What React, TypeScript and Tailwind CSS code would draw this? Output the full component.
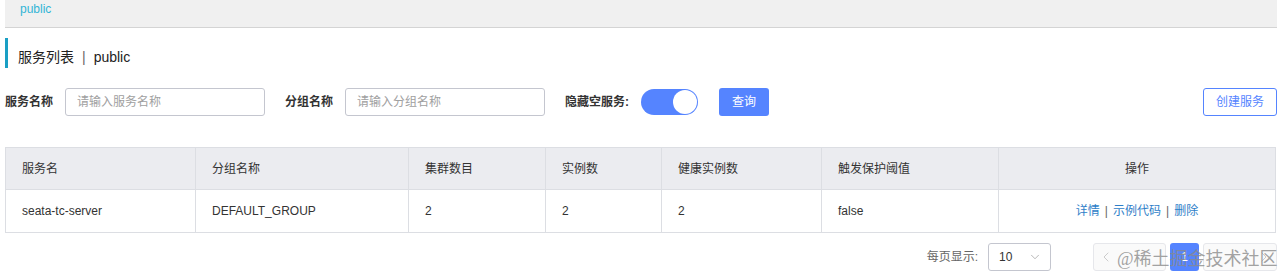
import { ChevronDown, ChevronLeft, ChevronRight } from 'lucide-react'

const FONT = { fontFamily: '"Liberation Sans", "Noto Sans CJK SC", sans-serif' }

const columns = [
  { key: 'name', title: '服务名', width: 190 },
  { key: 'group', title: '分组名称', width: 213 },
  { key: 'cluster', title: '集群数目', width: 137 },
  { key: 'ip', title: '实例数', width: 116 },
  { key: 'healthy', title: '健康实例数', width: 160 },
  { key: 'threshold', title: '触发保护阈值', width: 177 },
]

const rows = [
  { name: 'seata-tc-server', group: 'DEFAULT_GROUP', cluster: '2', ip: '2', healthy: '2', threshold: 'false' },
]

export default function App() {
  return (
    <div className="w-[1282px] h-[275px] bg-white overflow-hidden text-[#333] relative" style={FONT}>
      <div className="px-[5px]">
        {/* 命名空间栏 */}
        <div className="h-[28px] bg-[#f0f0f0] border-b border-[#d4d4d4] pl-[15px] flex items-center">
          <span className="text-[12px] text-[#33b5d6] -mt-[10px]">public</span>
        </div>

        {/* 标题 */}
        <div className="mt-[10px] h-[30px] border-l-[3px] border-[#1a9fc4] pl-[10px] pt-[8px] flex items-center text-[14px] text-[#222]">
          服务列表<span className="mx-[8px] text-[#666]">|</span>public
        </div>

        {/* 过滤 */}
        <div className="mt-[20px] h-[28px] flex items-center text-[12px]">
          <span className="font-bold w-[60px] text-[#333]">服务名称</span>
          <input
            className="w-[200px] h-[28px] border border-[#c4c6cf] rounded-[3px] px-[11px] text-[12px] placeholder-[#a0a0a0] outline-none"
            placeholder="请输入服务名称"
          />
          <span className="font-bold w-[60px] ml-[20px] text-[#333]">分组名称</span>
          <input
            className="w-[200px] h-[28px] border border-[#c4c6cf] rounded-[3px] px-[11px] text-[12px] placeholder-[#a0a0a0] outline-none"
            placeholder="请输入分组名称"
          />
          <span className="font-bold w-[76px] ml-[20px] text-[#333]">隐藏空服务:</span>
          <div className="w-[57px] h-[26px] rounded-full bg-[#5584ff] relative">
            <div className="absolute right-[1px] top-[1px] w-[24px] h-[24px] rounded-full bg-white" />
          </div>
          <button className="ml-[21px] w-[50px] h-[28px] rounded-[3px] bg-[#5584ff] text-white text-[12px]">查询</button>
          <button className="ml-auto w-[74px] h-[28px] rounded-[3px] border border-[#5584ff] text-[#5584ff] text-[12px] bg-white">
            创建服务
          </button>
        </div>

        {/* 列表 */}
        <table className="mt-[31px] w-[1271px] border-collapse text-[12px] table-fixed">
          <colgroup>
            {columns.map((c) => (
              <col key={c.key} style={{ width: c.width }} />
            ))}
            <col />
          </colgroup>
          <thead>
            <tr className="h-[42px] bg-[#ebecf0]">
              {columns.map((c) => (
                <th key={c.key} className="border border-[#dcdee3] px-[16px] text-left font-normal text-[#333]">
                  {c.title}
                </th>
              ))}
              <th className="border border-[#dcdee3] text-center font-normal text-[#333]">操作</th>
            </tr>
          </thead>
          <tbody>
            {rows.map((r) => (
              <tr key={r.name} className="h-[43px]">
                {columns.map((c) => (
                  <td key={c.key} className="border border-[#dcdee3] px-[16px] text-[#333]">
                    {r[c.key as keyof typeof r]}
                  </td>
                ))}
                <td className="border border-[#dcdee3] text-center text-[#2e7ec8]">
                  详情<span className="mx-[5px] text-[#666]">|</span>示例代码<span className="mx-[5px] text-[#666]">|</span>删除
                </td>
              </tr>
            ))}
          </tbody>
        </table>

        {/* 分页 */}
        <div className="mt-[10px] h-[28px] flex items-center justify-end text-[12px]">
          <span className="text-[#666] mr-[10px]">每页显示:</span>
          <div className="w-[63px] h-[28px] border border-[#c4c6cf] rounded-[3px] flex items-center justify-between pl-[10px] pr-[8px]">
            <span className="text-[#333]">10</span>
            <ChevronDown size={14} strokeWidth={1.2} className="text-[#999]" />
          </div>
          <div className="ml-[42px] flex items-center gap-[4px]">
            <button className="w-[73px] h-[28px] border border-[#e6e7eb] rounded-[3px] bg-[#fafafa] flex items-center pl-[4px] text-[#c0c0c0]">
              <ChevronLeft size={16} strokeWidth={1.2} />
            </button>
            <button className="w-[29px] h-[28px] rounded-[3px] bg-[#5584ff] text-white">1</button>
            <button className="w-[74px] h-[28px] border border-[#e6e7eb] rounded-[3px] bg-[#fafafa] flex items-center justify-end pr-[4px] text-[#c0c0c0]">
              <ChevronRight size={16} strokeWidth={1.2} />
            </button>
          </div>
        </div>
      </div>

      {/* 水印 */}
      <div
        className="absolute left-[1117px] top-[246px] text-[18px] text-[#8a8a8a]/80 whitespace-nowrap pointer-events-none"
        style={{ fontFamily: '"Liberation Serif", "Noto Sans CJK SC", serif' }}
      >
        @稀土掘金技术社区
      </div>
    </div>
  )
}
